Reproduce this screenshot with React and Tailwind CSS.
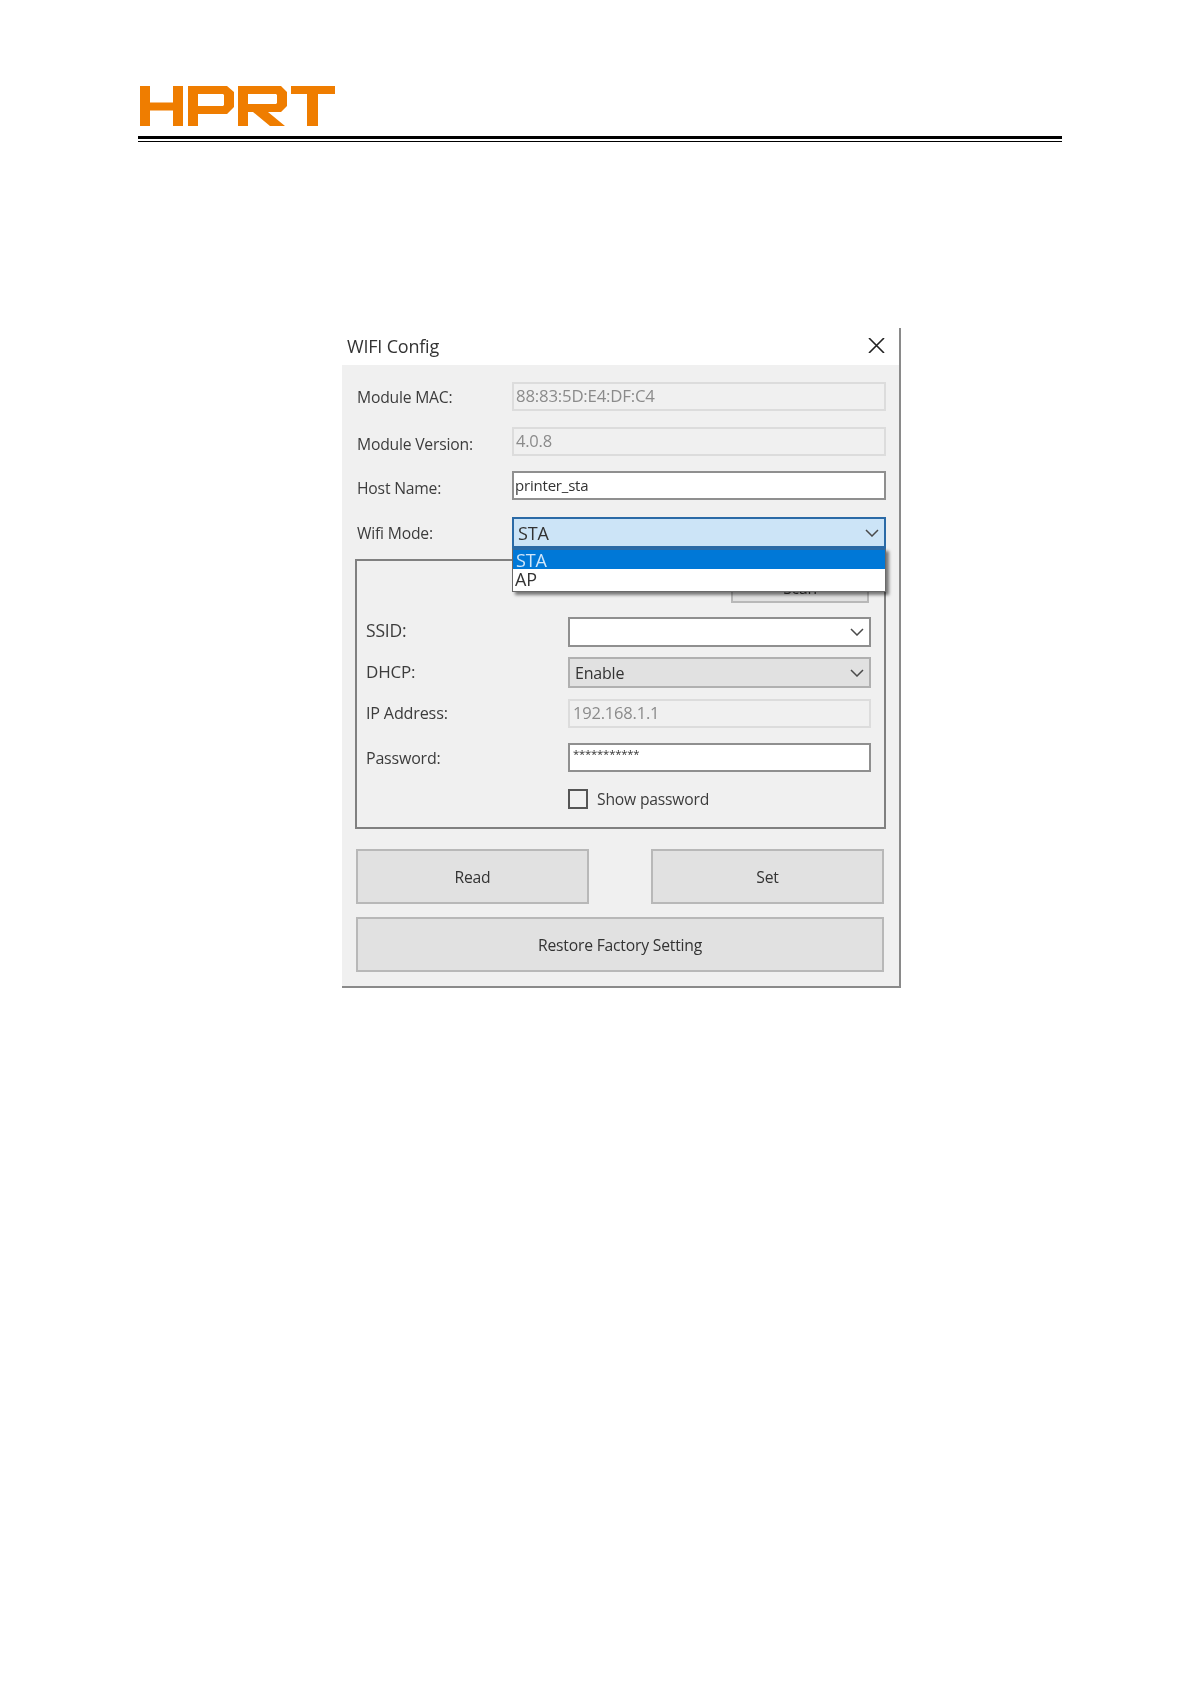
import React from 'react';

const Chevron = ({ className = '' }) => (
  <svg width="14" height="8" viewBox="0 0 14 8" fill="none" className={className}>
    <path d="M1 1l6 6 6-6" stroke="#4a4a4a" strokeWidth="1.5" />
  </svg>
);

const Logo = () => (
  <svg width="196" height="40" viewBox="140 86 196 40" className="block">
    <g fill="#ef7d00" fillRule="evenodd">
      <path d="M140 86h10v16.500h23V86h10v40h-10v-15.500h-23V126h-10z" />
      <path d="M188 86h39l7 6v15l-7 7h-29v12h-10zM198 94v12h25l1-1v-10l-1-1z" />
      <path d="M238 86h43l6 6v14l-6 6h-13l17 14h-15l-17-14h-5v14h-10zM248 94v10h28l1-1v-8l-1-1z" />
      <path d="M291 86h44v8h-17v32h-11V94h-16z" />
    </g>
  </svg>
);

const Field = ({ children, disabled, className = '' }) => (
  <div
    className={`flex items-center border-2 ${
      disabled ? 'border-[#dcdcdc] bg-[#f0f0f0] text-[#8b8b8b]' : 'border-[#8f8f8f] bg-white text-[#333]'
    } ${className}`}
  >
    {children}
  </div>
);

const Label = ({ children, className = '' }) => (
  <span className={`pl-[1px] text-[#3c3c3c] ${className}`}>{children}</span>
);

const Button = ({ children, className = '' }) => (
  <button className={`border-2 border-[#b8b8b8] bg-[#e1e1e1] pt-[2px] text-[15.700px] text-[#333] ${className}`}>{children}</button>
);

export default function App() {
  return (
    <div
      className="h-[1684px] overflow-hidden bg-white pt-[86px] text-[15.700px] leading-none tracking-[-0.2px]"
      style={{ fontFamily: '"Open Sans", "Liberation Sans", sans-serif' }}
    >
      <div className="ml-[138px] w-[924px]">
        <div className="pl-[2px]">
          <Logo />
        </div>
        <div className="mt-[10px] h-[3px] bg-black" />
        <div className="mt-[2px] h-px bg-black" />
      </div>

      <div className="relative ml-[342px] mt-[186px] w-[559px] border-r-2 border-[#8a8a8a] blur-[0.3px]">
        <div className="flex h-[37px] items-center justify-between bg-white pl-[5px] pr-[14px]">
          <span className="mt-[-2px] text-[18px] text-[#333]">WIFI Config</span>
          <svg width="17" height="15" viewBox="0 0 17 15" className="mt-[-2px]">
            <path d="M1 0l15 15M16 0L1 15" stroke="#222" strokeWidth="1.6" />
          </svg>
        </div>

        <div className="border-b-2 border-[#8a8a8a] bg-[#f0f0f0] pb-[14px] pl-[14px] pr-[13px] pt-[17px]">
          <div className="flex flex-col">
            <div className="flex items-center">
              <Label className="mt-[3px] w-[156px]">Module MAC:</Label>
              <Field disabled className="h-[29px] flex-1 pl-[2px] text-[16.800px]">88:83:5D:E4:DF:C4</Field>
            </div>
            <div className="mt-[16px] flex items-center">
              <Label className="mt-[7px] w-[156px]">Module Version:</Label>
              <Field disabled className="h-[29px] flex-1 pl-[2px] text-[16.500px]">4.0.8</Field>
            </div>
            <div className="mt-[15px] flex items-center">
              <Label className="mt-[6px] w-[156px]">Host Name:</Label>
              <Field className="h-[29px] flex-1 pl-[1px] text-[15px]">printer_sta</Field>
            </div>
            <div className="mt-[17px] flex items-center">
              <Label className="mt-[2px] w-[156px]">Wifi Mode:</Label>
              <div className="relative flex h-[31px] flex-1 items-center justify-between border-2 border-[#2b6aa6] bg-[#cce4f7] pl-[4px] pr-[5px] text-[18px] text-[#333]">
                STA
                <Chevron />
                <div className="absolute left-[-2px] right-[-2px] top-[29px] z-10 h-[44px] border border-t-2 border-[#6a6a6a] border-t-[#2b6aa6] bg-white text-[18px] shadow-[3px_3px_3px_rgba(0,0,0,0.5)]">
                  <div className="flex h-[19px] items-center bg-[#0078d7] pl-[3px] text-[#cfe6fa]">STA</div>
                  <div className="flex h-[20px] items-center pl-[2px] text-[#333]">AP</div>
                </div>
              </div>
            </div>
          </div>

          <div className="ml-[-1px] mt-[11px] border-2 border-[#808080] pb-[18px] pl-[8px] pr-[13px] pt-[12px]">
            <div className="flex justify-end">
              <Button className="mr-[2px] h-[30px] w-[138px]">Scan</Button>
            </div>
            <div className="mt-[14px] flex items-center">
              <Label className="mb-[2px] w-[203px] text-[17.500px]">SSID:</Label>
              <Field className="h-[30px] flex-1 justify-end pr-[5px]">
                <Chevron />
              </Field>
            </div>
            <div className="mt-[10px] flex items-center">
              <Label className="mb-[3px] w-[203px] text-[17px]">DHCP:</Label>
              <div className="flex h-[31px] flex-1 items-center justify-between border-2 border-[#b0b0b0] bg-[#e1e1e1] pl-[5px] pr-[5px] text-[16px] text-[#333]">
                Enable
                <Chevron />
              </div>
            </div>
            <div className="mt-[11px] flex items-center">
              <Label className="w-[203px] text-[16.200px]">IP Address:</Label>
              <Field disabled className="h-[29px] flex-1 pl-[3px] text-[16.500px]">192.168.1.1</Field>
            </div>
            <div className="mt-[15px] flex items-center">
              <Label className="w-[203px] text-[16px]">Password:</Label>
              <Field className="h-[29px] flex-1 items-start pl-[3px] pt-[3px] text-[11.300px]">***********</Field>
            </div>
            <div className="mt-[17px] flex items-center pl-[203px]">
              <span className="h-[20px] w-[20px] border-2 border-[#555] bg-[#f0f0f0]" />
              <Label className="ml-[8px] mt-[2px]">Show password</Label>
            </div>
          </div>

          <div className="mt-[20px] flex justify-between pr-[2px]">
            <Button className="h-[55px] w-[233px]">Read</Button>
            <Button className="h-[55px] w-[233px]">Set</Button>
          </div>
          <Button className="mt-[13px] block h-[55px] w-[528px]">Restore Factory Setting</Button>
        </div>
      </div>
    </div>
  );
}
